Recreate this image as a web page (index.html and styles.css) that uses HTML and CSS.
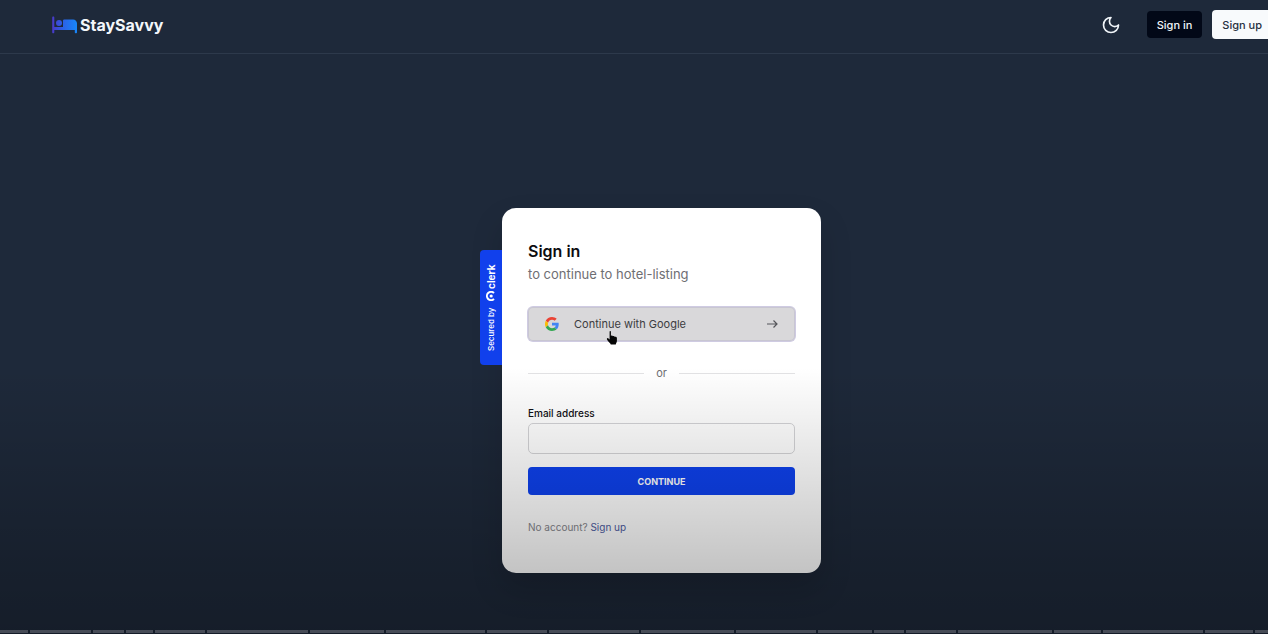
FILE: index.html
```html
<!DOCTYPE html>
<html lang="en">
<head>
<meta charset="utf-8">
<title>StaySavvy</title>
<link rel="stylesheet" href="styles.css">
</head>
<body>
<div class="frame">
  <div class="page">
    <header class="topbar">
      <a class="brand" href="#">
        <svg class="brand-icon" viewBox="0 0 26 18" aria-hidden="true">
          <defs>
            <linearGradient id="bed" x1="0" x2="1" y1="0" y2="0">
              <stop offset="0" stop-color="#4a38c8"/>
              <stop offset="0.45" stop-color="#2b62e6"/>
              <stop offset="1" stop-color="#1787fa"/>
            </linearGradient>
          </defs>
          <path fill="url(#bed)" d="M1.2 0.5C1.9 .5 2.3 1 2.3 1.6V11H11V4.8C11 4.1 11.5 3.5 12.2 3.5H21C23.4 3.5 25 5.2 25 7.5V16.2C25 16.8 24.5 17.2 23.9 17.2S22.8 16.8 22.8 16.2V14H2.3V16.2C2.3 16.8 1.9 17.2 1.2 17.2S.2 16.8 .2 16.2V1.6C.2 1 .6 .5 1.2 .5ZM7 4A3 3 0 1 1 7 10A3 3 0 1 1 7 4Z"/>
        </svg>
        <span>StaySavvy</span>
      </a>
      <nav class="actions">
        <button class="theme" type="button" aria-label="Toggle theme">
          <svg viewBox="0 0 24 24" aria-hidden="true"><path d="M12 3a6 6 0 0 0 9 9 9 9 0 1 1-9-9Z"/></svg>
        </button>
        <button class="btn btn-dark" type="button">Sign in</button>
        <button class="btn btn-light" type="button">Sign up</button>
      </nav>
    </header>
    <main class="content">
      <section class="card">
        <a class="secured" href="#">
          <span>Secured by</span>
          <svg class="clerk-mark" viewBox="0 0 12 12" aria-hidden="true">
            <path d="M9.6 2.4A5 5 0 1 0 9.6 9.6" fill="none" stroke="#fff" stroke-width="2.4"/>
            <circle cx="6.2" cy="6" r="1.9" fill="#fff"/>
          </svg>
          <strong>clerk</strong>
        </a>
        <h1>Sign in</h1>
        <p class="subtitle">to continue to hotel-listing</p>
        <button class="google" type="button">
          <svg class="google-icon" viewBox="0 0 48 48" aria-hidden="true">
            <path fill="#ea4335" d="M24 9.5c3.54 0 6.71 1.22 9.21 3.6l6.85-6.85C35.9 2.38 30.47 0 24 0 14.62 0 6.51 5.38 2.56 13.22l7.98 6.19C12.43 13.72 17.74 9.5 24 9.5z"/>
            <path fill="#4285f4" d="M46.98 24.55c0-1.57-.15-3.09-.38-4.55H24v9.02h12.94c-.58 2.96-2.26 5.48-4.78 7.18l7.73 6c4.51-4.18 7.09-10.36 7.09-17.65z"/>
            <path fill="#fbbc05" d="M10.53 28.59A14.5 14.5 0 0 1 9.77 24c0-1.6.27-3.14.76-4.59l-7.98-6.19A24 24 0 0 0 0 24c0 3.88.92 7.54 2.56 10.78z"/>
            <path fill="#34a853" d="M24 48c6.48 0 11.93-2.13 15.89-5.81l-7.73-6c-2.15 1.45-4.92 2.3-8.16 2.3-6.26 0-11.57-4.22-13.47-9.91l-7.98 6.19C6.51 42.62 14.62 48 24 48z"/>
          </svg>
          <span class="google-label">Continue with Google</span>
          <svg class="arrow" viewBox="0 0 12 12" aria-hidden="true"><path d="M1 6H11M7.5 2.5L11 6L7.5 9.5"/></svg>
          <svg class="pointer" viewBox="0 0 12 16" aria-hidden="true"><path d="M3.6 1.6C3.6 .7 4.9 .7 4.9 1.6V6C5.5 5.4 6.7 5.5 6.9 6.3C7.5 5.8 8.6 6 8.8 6.9C9.5 6.5 10.8 6.8 10.9 8V11C10.9 12.3 10 13 9.8 14.6H4.8C4.6 13.2 2.3 11.7 1.1 9.7C.4 8.5 1.6 7.6 2.4 8.4L3.6 9.5Z"/></svg>
        </button>
        <div class="divider"><span>or</span></div>
        <form class="form">
          <label for="email">Email address</label>
          <input id="email" type="email">
          <button class="continue" type="button">CONTINUE</button>
        </form>
        <p class="footer">No account? <a href="#">Sign up</a></p>
      </section>
    </main>
  </div>
  <div class="shade"></div>
  <div class="chapters">
    <i style="flex-grow:28"></i><i style="flex-grow:61"></i><i style="flex-grow:31"></i><i style="flex-grow:27"></i><i style="flex-grow:50"></i><i style="flex-grow:101"></i><i style="flex-grow:74"></i><i style="flex-grow:99"></i><i style="flex-grow:60"></i><i style="flex-grow:90"></i><i style="flex-grow:93"></i><i style="flex-grow:80"></i><i style="flex-grow:54"></i><i style="flex-grow:30"></i><i style="flex-grow:50"></i><i style="flex-grow:94"></i><i style="flex-grow:47"></i><i style="flex-grow:100"></i><i style="flex-grow:48"></i><i style="flex-grow:13"></i>
  </div>
</div>
</body>
</html>
```
FILE: styles.css
```css
* { box-sizing: border-box; }
body { margin: 0; font-family: Inter, "Liberation Sans", sans-serif; }
h1, p { margin: 0; }
a { text-decoration: none; color: inherit; }
button { font: inherit; border: 0; }

.frame {
  position: relative;
  min-height: 100vh;
  overflow: hidden;
  background: #1e293a;
  display: flex;
  flex-direction: column;
}
/* the page runs on past the right edge of the frame */
.page { margin-right: -55px; flex: 1; display: flex; flex-direction: column; }

.topbar {
  display: flex;
  align-items: center;
  justify-content: space-between;
  padding: 10px 51px 14px 52px;
  border-bottom: 1px solid #2d394b;
}
.brand { display: flex; align-items: center; gap: 2px; color: #f4f7fb; font-size: 16px; line-height: 24px; font-weight: 700; }
.brand-icon { width: 26px; height: 18px; }
.actions { display: flex; align-items: center; gap: 10px; }
.theme { background: none; padding: 0; margin-right: 16px; width: 20px; height: 20px; }
.theme svg { display: block; width: 20px; height: 20px; fill: none; stroke: #f1f5f9; stroke-width: 2; stroke-linecap: round; stroke-linejoin: round; }
.btn { border-radius: 4px; padding: 0 10px; font-size: 11px; font-weight: 500; }
.btn-dark { background: #020817; color: #f1f5f9; height: 27px; }
.btn-light { background: #f8fafc; color: #26303f; height: 29px; }

.content { flex: 1; display: flex; justify-content: center; align-items: flex-start; padding: 154px 0 61px; }
.card {
  position: relative;
  width: 319px;
  padding: 31px 26px 38px;
  border-radius: 14px;
  background: #fff;
  box-shadow: 0 16px 32px rgba(0, 0, 0, .15);
}
.secured {
  position: absolute;
  right: 100%;
  top: 42px;
  width: 22px;
  height: 115px;
  writing-mode: vertical-rl;
  transform: rotate(180deg);
  display: flex;
  align-items: center;
  justify-content: center;
  gap: 6px;
  border-radius: 0 4px 4px 0;
  background: #1140ec;
  color: #fff;
  font-size: 8px;
  font-weight: 500;
}
.secured strong { font-size: 10px; font-weight: 700; margin-top: -4px; }
.clerk-mark { width: 10px; height: 10px; transform: rotate(180deg); }

h1 { font-size: 16px; line-height: 24px; font-weight: 600; color: #0c0c0f; }
.subtitle { margin-top: 1px; font-size: 13px; line-height: 20px; color: #6e6e73; }
.google {
  position: relative;
  display: flex;
  align-items: center;
  width: 100%;
  height: 34px;
  margin-top: 23px;
  padding: 0 17px;
  border-radius: 5px;
  background: #d9d8da;
  box-shadow: inset 0 0 0 1px #c8c6d2, 0 0 0 1px #cfcbe2;
  color: #3c3c40;
  font-size: 11px;
  text-align: left;
}
.google-icon { width: 14px; height: 14px; margin-right: 15px; }
.google-label { flex: 1; }
.arrow { width: 12px; height: 12px; fill: none; stroke: #55555a; stroke-width: 1.2; }
.pointer { position: absolute; left: 78px; top: 23px; width: 12px; height: 16px; fill: #050505; }

.divider { display: flex; align-items: center; gap: 12px; margin-top: 22px; font-size: 11px; line-height: 20px; color: #6e6e73; }
.divider::before, .divider::after { content: ""; flex: 1; height: 1px; background: #e2e2e4; }

.form { display: flex; flex-direction: column; margin-top: 22px; }
label { font-size: 10px; line-height: 16px; font-weight: 500; color: #101014; }
input { height: 31px; margin: 2px 0 13px; padding: 0 10px; border: 1px solid #d3d3d6; border-radius: 5px; background: transparent; font: inherit; font-size: 12px; }
.continue { height: 28px; border-radius: 4px; background: #0e41ed; color: #fff; font-size: 9px; font-weight: 700; }
.footer { margin-top: 24px; font-size: 10px; line-height: 16px; color: #85858b; }
.footer a { color: #4c5ba0; }

.shade {
  position: absolute;
  inset: 0;
  pointer-events: none;
  background: linear-gradient(to bottom, rgba(0, 0, 0, 0) 58%, rgba(0, 0, 0, .12) 75%, rgba(0, 0, 0, .23) 90%, rgba(0, 0, 0, .29));
}
.chapters { position: absolute; left: 0; right: 0; bottom: 1px; display: flex; gap: 2px; }
.chapters i { flex: 0 1 0; height: 3px; background: #474c57; }
```
